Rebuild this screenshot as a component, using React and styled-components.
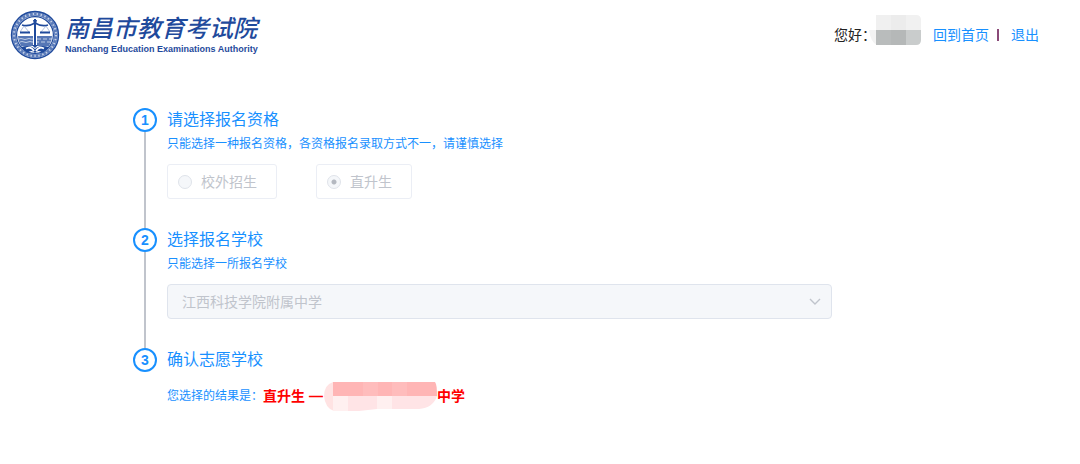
import { useState } from "react";
import styled, { createGlobalStyle } from "styled-components";

const GlobalStyle = createGlobalStyle`
  * {
    box-sizing: border-box;
  }

  body {
    margin: 0;
    background: #fff;
    color: #222;
    font-family: "Liberation Sans", "Noto Sans CJK SC", sans-serif;
    font-size: 14px;
    line-height: 20px;
  }
`;

const Header = styled.header`
  display: flex;
  align-items: center;
  justify-content: space-between;
  height: 70px;
  padding: 0 41px 0 10px;
`;

const Brand = styled.div`
  display: flex;
  align-items: center;
  gap: 5px;
  color: #1f4a9c;
`;

const BrandName = styled.div`
  font-family: "Noto Sans CJK SC", sans-serif;
  font-size: 24px;
  font-style: italic;
  font-weight: 500;
  line-height: 28px;
  white-space: nowrap;
`;

const BrandCaption = styled.div`
  font-size: 9px;
  font-weight: 700;
  line-height: 16px;
  white-space: nowrap;
`;

const UserBar = styled.nav`
  display: flex;
  align-items: center;
  white-space: nowrap;
`;

const UserLink = styled.a`
  color: #1890ff;
  text-decoration: none;
`;

const Divider = styled.span`
  width: 2px;
  height: 12px;
  margin: 0 12px 0 8px;
  background: #8a4a78;
`;

const Steps = styled.ol`
  max-width: 832px;
  margin: 0;
  padding: 38px 0 0 133px;
  list-style: none;
`;

const StepItem = styled.li`
  display: flex;
  gap: 10px;
`;

const Rail = styled.div`
  display: flex;
  flex-direction: column;
  align-items: center;
  width: 24px;
`;

const StepNumber = styled.span`
  width: 24px;
  height: 24px;
  border: 2px solid #1890ff;
  border-radius: 50%;
  color: #1890ff;
  font-weight: 700;
  text-align: center;
`;

const RailLine = styled.span`
  flex: 1;
  width: 2px;
  background: #c0c4cc;
`;

const StepBody = styled.div`
  flex: 1;
  min-width: 0;
  padding-bottom: ${(props) => (props.$last ? 0 : 29)}px;
`;

const StepTitle = styled.h2`
  margin: 0;
  color: #1890ff;
  font-size: 16px;
  font-weight: 400;
  line-height: 24px;
`;

const StepHint = styled.p`
  display: block;
  margin: 2px 0 10px;
  color: #1890ff;
  font-size: 12px;
`;

const RadioRow = styled.div`
  display: flex;
  gap: 39px;
`;

const RadioCard = styled.label`
  display: flex;
  align-items: center;
  gap: 9px;
  height: 35px;
  padding: 0 19px 0 10px;
  border: 1px solid #ebeef5;
  border-radius: 3px;
  color: #c0c4cc;
`;

const Radio = styled.input`
  appearance: none;
  width: 14px;
  height: 14px;
  margin: 0;
  border: 1px solid #dfe3ea;
  border-radius: 50%;
  background: #f5f7fa;

  &:checked {
    background: radial-gradient(circle, #b4b8c0 2px, #f5f7fa 3px);
  }
`;

const SelectBox = styled.div`
  position: relative;
`;

const Select = styled.select`
  appearance: none;
  display: block;
  width: 100%;
  height: 35px;
  padding: 0 30px 0 14px;
  border: 1px solid #dfe4ed;
  border-radius: 4px;
  background: #f5f7fa;
  color: #c0c4cc;
  font: inherit;
  opacity: 1;
`;

const Chevron = styled.svg`
  position: absolute;
  top: 12px;
  right: 11px;
  pointer-events: none;
`;

const Result = styled.p`
  display: flex;
  align-items: center;
  margin: 9px 0 0;
  color: #1890ff;
  font-size: 12px;
`;

const ResultValue = styled.strong`
  display: flex;
  align-items: center;
  color: #f00;
  font-size: 14px;
`;

// Smudge over the user's name, tucked against the colon
const Mask = styled.svg`
  margin: 0 12px 0 -7px;
`;

function Emblem() {
  return (
    <svg width="50" height="50" viewBox="0 0 50 50" fill="none" aria-hidden="true">
      <circle cx="25" cy="25" r="23.4" stroke="#1f4a9c" strokeWidth="1.6" />
      <circle cx="25" cy="25" r="21" stroke="#5c7cba" strokeWidth="3.6" />
      <circle cx="25" cy="25" r="21" stroke="#c3cfe6" strokeWidth="2" strokeDasharray="1.4 2.6" />
      <circle cx="25" cy="25" r="18.4" stroke="#1f4a9c" strokeWidth="1.2" />
      <path d="M8 26H23V36H11Q8 31 8 26ZM27 26H42Q42 31 39 36H27Z" fill="#5677b6" />
      <path
        d="M9 29q2-1 4 0t4 0t4 0h2M10 32q2-1 4 0t4 0t4 0h1M27 29h4m2 0h4m2 0h3M27 32h2m2 0h4m2 0h4"
        stroke="#dbe3f1"
        strokeWidth="0.8"
      />
      <path d="M25 9V37" stroke="#1f4a9c" strokeWidth="2" />
      <path d="M12 15Q18 17 25 13Q32 17 38 15" stroke="#1f4a9c" strokeWidth="1.6" />
      <path
        d="M14 16L10 22M14 16L19 22M36 16L31 22M36 16L40 22"
        stroke="#8fa5d0"
        strokeWidth="0.7"
      />
      <path d="M10 22.5H20M30 22.5H40" stroke="#1f4a9c" strokeWidth="1.8" />
      <path d="M23 10H27L26 14H24ZM22 35H28L25 38Z" fill="#1f4a9c" />
      <path
        d="M11 37Q20 34 25 39Q30 34 39 37L33 43Q28 39 25 43Q22 39 17 43Z"
        fill="#1f4a9c"
      />
      <path d="M16 38.5Q21 36 24 41M34 38.5Q29 36 26 41" stroke="#fff" strokeWidth="1.8" />
    </svg>
  );
}

function NameMask() {
  return (
    <Mask width="52" height="40" viewBox="0 0 52 40" aria-hidden="true">
      <path d="M0 15H8V30Q2 28 0 15Z" fill="#f3f3f3" />
      <path d="M7 0H22V15H7Z" fill="#f0f0f0" />
      <path d="M22 0H37V15H22Z" fill="#ececec" />
      <path d="M37 0H47Q52 0 52 5V15H37Z" fill="#f1f1f1" />
      <path d="M7 15H22V30H7Z" fill="#b9bcbc" />
      <path d="M22 15H37V30H22Z" fill="#b5b8b8" />
      <path d="M37 15H52V25Q52 30 47 30H37Z" fill="#c9cccc" />
    </Mask>
  );
}

function SchoolMask() {
  return (
    <svg width="114" height="30" viewBox="0 0 114 30" aria-hidden="true">
      <path d="M10 1Q1 4 1 15Q2 27 11 30V1Z" fill="#ffe3e3" />
      <path d="M10 1H112Q114 3 114 15H10Z" fill="#ffb5b5" />
      <path d="M40 1H55V15H40ZM69 1H84V15H69Z" fill="#ffbcbc" />
      <path d="M10 15H114Q110 27 96 28H54L36 30H10Z" fill="#ffe4e6" />
      <path d="M10 15H25V30H10ZM54 15H69V28H54Z" fill="#fff0f0" />
    </svg>
  );
}

function Step({ number, title, last, children }) {
  return (
    <StepItem>
      <Rail>
        <StepNumber>{number}</StepNumber>
        {!last && <RailLine />}
      </Rail>
      <StepBody $last={last}>
        <StepTitle>{title}</StepTitle>
        {children}
      </StepBody>
    </StepItem>
  );
}

const options = ["校外招生", "直升生"];

export default function App() {
  const [type, setType] = useState("直升生");

  return (
    <>
      <GlobalStyle />
      <Header>
        <Brand>
          <Emblem />
          <div>
            <BrandName>南昌市教育考试院</BrandName>
            <BrandCaption>Nanchang Education Examinations Authority</BrandCaption>
          </div>
        </Brand>
        <UserBar>
          <span>您好：</span>
          <NameMask />
          <UserLink href="#home">回到首页</UserLink>
          <Divider />
          <UserLink href="#logout">退出</UserLink>
        </UserBar>
      </Header>
      <main>
        <Steps>
          <Step number={1} title="请选择报名资格">
            <StepHint>只能选择一种报名资格，各资格报名录取方式不一，请谨慎选择</StepHint>
            <RadioRow>
              {options.map((option) => (
                <RadioCard key={option}>
                  <Radio
                    type="radio"
                    name="type"
                    value={option}
                    checked={type === option}
                    onChange={() => setType(option)}
                    disabled
                  />
                  {option}
                </RadioCard>
              ))}
            </RadioRow>
          </Step>
          <Step number={2} title="选择报名学校">
            <StepHint as="label" htmlFor="school">
              只能选择一所报名学校
            </StepHint>
            <SelectBox>
              <Select id="school" disabled>
                <option>江西科技学院附属中学</option>
              </Select>
              <Chevron width="12" height="12" viewBox="0 0 12 12" fill="none">
                <path d="M1 3L6 8L11 3" stroke="#c0c4cc" strokeWidth="1.4" />
              </Chevron>
            </SelectBox>
          </Step>
          <Step number={3} title="确认志愿学校" last>
            <Result>
              <span>您选择的结果是：</span>
              <ResultValue>
                {type} —<SchoolMask />
                中学
              </ResultValue>
            </Result>
          </Step>
        </Steps>
      </main>
    </>
  );
}
